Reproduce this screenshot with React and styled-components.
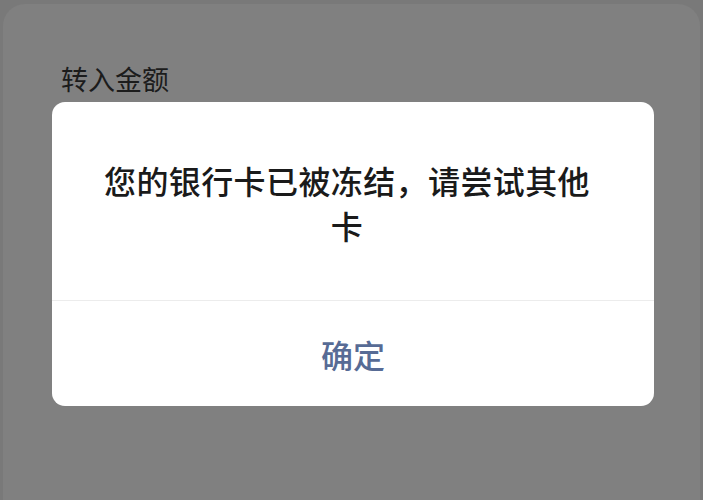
import styled, { createGlobalStyle } from 'styled-components'

const GlobalStyle = createGlobalStyle`
    html, body {
        margin: 0;
        padding: 0;
        background: #797979;
    }

    body {
        font-family: "Noto Sans CJK SC", "Noto Sans", sans-serif;
    }
`

// page sheet behind the mask

const Sheet = styled.main`
    box-sizing: border-box;
    min-height: 496px;
    margin: 4px 3px 0;
    padding: 60px 46px 0 49px;
    border-radius: 22px 22px 0 0;
    background: #808080;
`

const Label = styled.div`
    padding-left: 9px;
    font-size: 27px;
    line-height: 30px;
    color: #1c1c1c;
`

// dialog

const Dialog = styled.section`
    display: flex;
    flex-direction: column;
    width: 602px;
    margin-top: 8px;
    border-radius: 13px;
    background: #ffffff;
    overflow: hidden;
`

const Message = styled.p`
    margin: 0;
    padding: 56px 54px 52px 42px;
    font-size: 32px;
    font-weight: 500;
    line-height: 45px;
    letter-spacing: 0.4px;
    text-align: center;
    color: #1a1a1a;
`

const Actions = styled.div`
    display: flex;
    border-top: 1px solid #ececec;
`

const Button = styled.button`
    flex: 1;
    height: 105px;
    padding: 0;
    border: none;
    background: transparent;
    font-family: inherit;
    font-size: 32px;
    font-weight: 500;
    color: ${props => props.$color || '#576b95'};
`

export default function App() {
    return (
        <>
            <GlobalStyle />
            <Sheet>
                <Label>转入金额</Label>
                <Dialog>
                    <Message>您的银行卡已被冻结，请尝试其他卡</Message>
                    <Actions>
                        <Button>确定</Button>
                    </Actions>
                </Dialog>
            </Sheet>
        </>
    )
}
